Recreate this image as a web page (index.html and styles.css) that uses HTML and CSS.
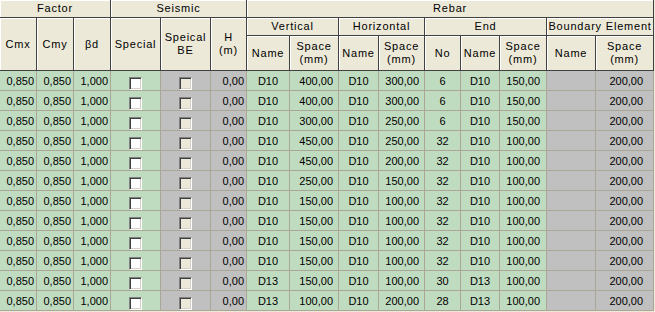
FILE: index.html
```html
<!DOCTYPE html>
<html>
<head>
<meta charset="utf-8">
<link rel="stylesheet" href="styles.css">
</head>
<body>
<table class="grid">
<colgroup>
<col class="c37"><col class="c37"><col class="c37"><col class="c50"><col class="c50"><col class="c36">
<col class="c43"><col class="c49"><col class="c40"><col class="c46"><col class="c36"><col class="c39"><col class="c47"><col class="c49"><col class="c58">
</colgroup>
<thead>
<tr class="r1"><th colspan="3">Factor</th><th colspan="3">Seismic</th><th colspan="9">Rebar</th></tr>
<tr class="r2"><th rowspan="2">Cmx</th><th rowspan="2">Cmy</th><th rowspan="2">βd</th><th rowspan="2">Special</th><th rowspan="2">Speical<br>BE</th><th rowspan="2">H<br>(m)</th><th colspan="2">Vertical</th><th colspan="2">Horizontal</th><th colspan="3">End</th><th colspan="2">Boundary Element</th></tr>
<tr class="r3"><th>Name</th><th>Space<br>(mm)</th><th>Name</th><th>Space<br>(mm)</th><th>No</th><th>Name</th><th>Space<br>(mm)</th><th>Name</th><th>Space<br>(mm)</th></tr>
</thead>
<tbody id="rows"></tbody>
</table>
<script src="script.js"></script>
</body>
</html>
```
FILE: styles.css
```css
body{margin:0;background:#ece9d8;}
.grid{border-collapse:separate;border-spacing:0;table-layout:fixed;width:654px;font-family:"Liberation Sans",Arial,sans-serif;font-size:11px;color:#000;}
.c37{width:37px}.c50{width:50px}.c36{width:36px}.c43{width:43px}.c49{width:49px}.c40{width:40px}.c46{width:46px}.c39{width:39px}.c47{width:47px}.c58{width:58px}
.grid th{background:#ece9d8;font-weight:normal;border-right:1px solid #404040;border-bottom:1px solid #404040;box-shadow:inset 1px 1px 0 #fff;padding:0;letter-spacing:0.8px;line-height:13px;vertical-align:middle;text-align:center;white-space:nowrap;overflow:hidden;}
.r1 th{height:17px}
.r2 th{height:17px}
.r3 th{height:34px}
.grid tbody tr{height:20px}
.grid td{box-sizing:border-box;height:20px;padding:2px 0 0 0;border-right:1px solid #aba796;border-bottom:1px solid #aba796;background:#c0dcc0;line-height:17px;vertical-align:top;white-space:nowrap;overflow:hidden;}
.grid td.g{background:#c0c0c0}
.num{text-align:right;padding-right:2px !important}
.ctr{text-align:center}
.sv{text-align:right;padding-right:5px !important}
.se{text-align:right;padding-right:6px !important}
.sb{text-align:right;padding-right:10px !important}
.cbcell{text-align:center;line-height:0 !important}
.cb{display:inline-block;box-sizing:border-box;width:13px;height:13px;margin-top:4px;background:#fff;border:1px solid;border-color:#808080 #fff #fff #808080;box-shadow:inset 1px 1px 0 #404040,inset -1px -1px 0 #d4d0c8;}
.cb.dis{background:#ece9d8}
```
FILE: script.js
```js
var data=[
["D10","400,00","D10","300,00","6","D10","150,00"],
["D10","400,00","D10","300,00","6","D10","150,00"],
["D10","300,00","D10","250,00","6","D10","150,00"],
["D10","450,00","D10","250,00","32","D10","100,00"],
["D10","450,00","D10","200,00","32","D10","100,00"],
["D10","250,00","D10","150,00","32","D10","100,00"],
["D10","150,00","D10","100,00","32","D10","100,00"],
["D10","150,00","D10","100,00","32","D10","100,00"],
["D10","150,00","D10","100,00","32","D10","100,00"],
["D10","150,00","D10","100,00","32","D10","100,00"],
["D13","150,00","D10","100,00","30","D13","100,00"],
["D13","100,00","D10","200,00","28","D13","100,00"]
];
var tb=document.getElementById("rows");
data.forEach(function(r){
  var tr=document.createElement("tr");
  tr.innerHTML='<td class="num">0,850</td><td class="num">0,850</td><td class="num">1,000</td>'+
  '<td class="cbcell"><span class="cb"></span></td><td class="cbcell g"><span class="cb dis"></span></td><td class="num g">0,00</td>'+
  '<td class="ctr">'+r[0]+'</td><td class="sv">'+r[1]+'</td><td class="ctr">'+r[2]+'</td><td class="sv">'+r[3]+'</td><td class="ctr">'+r[4]+'</td><td class="ctr">'+r[5]+'</td><td class="se">'+r[6]+'</td><td class="g"></td><td class="sb g">200,00</td>';
  tb.appendChild(tr);
});
```
